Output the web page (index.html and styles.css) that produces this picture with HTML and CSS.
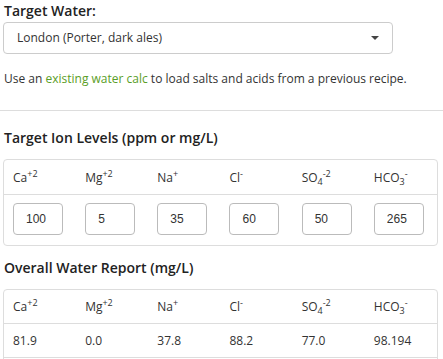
FILE: index.html
```html
<!DOCTYPE html>
<html>

<head>
    <link rel="stylesheet" href="styles.css">
    <title>Water Calculator</title>
</head>

<body>
    <div class="page">
        <div class="block">
            <div class="label">Target Water:</div>
            <div class="select">
                <span>London (Porter, dark ales)</span>
                <span class="caret"></span>
            </div>
            <p class="hint">Use an <a href="#">existing water calc</a> to load salts and acids from a previous recipe.</p>
        </div>

        <hr class="rule">

        <div class="block">
            <h3 class="heading">Target Ion Levels (ppm or mg/L)</h3>
            <table class="ions">
                <tr>
                    <th>Ca<sup>+2</sup></th>
                    <th>Mg<sup>+2</sup></th>
                    <th>Na<sup>+</sup></th>
                    <th>Cl<sup>-</sup></th>
                    <th>SO<sub>4</sub><sup>-2</sup></th>
                    <th>HCO<sub>3</sub><sup>-</sup></th>
                </tr>
                <tr class="input_row">
                    <td><input type="text" value="100"></td>
                    <td><input type="text" value="5"></td>
                    <td><input type="text" value="35"></td>
                    <td><input type="text" value="60"></td>
                    <td><input type="text" value="50"></td>
                    <td><input type="text" value="265"></td>
                </tr>
            </table>

            <h3 class="heading">Overall Water Report (mg/L)</h3>
            <table class="ions report">
                <tr>
                    <th>Ca<sup>+2</sup></th>
                    <th>Mg<sup>+2</sup></th>
                    <th>Na<sup>+</sup></th>
                    <th>Cl<sup>-</sup></th>
                    <th>SO<sub>4</sub><sup>-2</sup></th>
                    <th>HCO<sub>3</sub><sup>-</sup></th>
                </tr>
                <tr>
                    <td>81.9</td>
                    <td>0.0</td>
                    <td>37.8</td>
                    <td>88.2</td>
                    <td>77.0</td>
                    <td>98.194</td>
                </tr>
                <tr>
                    <td colspan="6">&nbsp;</td>
                </tr>
            </table>
        </div>
    </div>
</body>

</html>
```

FILE: styles.css
```css
body {
    margin: 0;
    font-family: "Open Sans", sans-serif;
    font-size: 12px;
    line-height: 18px;
    color: #333333;
    background: #ffffff;
}

.block {
    padding: 0 5px 0 3px;
}

.label {
    font-size: 14px;
    line-height: 20px;
    font-weight: 600;
    color: #222222;
    padding: 1px 0 0 1px;
    margin-bottom: 1px;
}

.select {
    display: flex;
    align-items: center;
    justify-content: space-between;
    width: 390px;
    height: 32px;
    box-sizing: border-box;
    padding: 0 13px 0 13px;
    border: 1px solid #cccccc;
    border-radius: 4px;
    color: #333333;
}

.caret {
    width: 0;
    height: 0;
    border-left: 4px solid transparent;
    border-right: 4px solid transparent;
    border-top: 4px solid #444444;
}

.hint {
    margin: 16px 0 0 1px;
}

.hint a {
    color: #5a9e27;
    text-decoration: none;
}

.rule {
    border: none;
    border-top: 1px solid #dddddd;
    margin: 22px 0 17px 0;
}

.heading {
    font-size: 14px;
    line-height: 20px;
    font-weight: 600;
    color: #222222;
    margin: 0 0 11px 1px;
}

.ions {
    width: 100%;
    table-layout: fixed;
    border-collapse: separate;
    border-spacing: 0;
    border: 1px solid #dddddd;
    border-radius: 4px;
    margin-bottom: 12px;
}

.ions th,
.ions td {
    text-align: left;
    font-weight: normal;
    padding: 9px 9px 8px 9px;
    line-height: 17px;
}

.ions td {
    border-top: 1px solid #dddddd;
}

.ions sup,
.ions sub {
    font-size: 9px;
    line-height: 0;
}

.input_row td {
    padding: 8px 9px 10px 9px;
}

.input_row input {
    display: block;
    width: 50px;
    height: 32px;
    box-sizing: border-box;
    padding: 0 0 0 12px;
    border: 1px solid #bbbbbb;
    border-radius: 4px;
    font-family: "Liberation Sans", Arial, sans-serif;
    font-size: 12px;
    color: #333333;
}

.report th {
    padding: 8px 9px;
}

.report td {
    padding: 8px 9px;
}
```
